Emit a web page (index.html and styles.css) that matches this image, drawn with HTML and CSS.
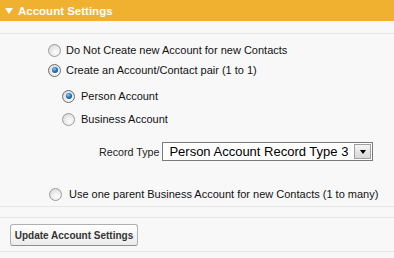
FILE: index.html
```html
<!DOCTYPE html>
<html>
<head>
<meta charset="utf-8">
<link rel="stylesheet" href="styles.css">
</head>
<body>
<div class="panel">
  <div class="header"><span class="tri"></span><span class="title">Account Settings</span></div>
  <div class="spacer"></div>
  <div class="options">
    <label class="row r1"><span class="radio"></span><span class="lbl">Do Not Create new Account for new Contacts</span></label>
    <label class="row r2"><span class="radio on"></span><span class="lbl">Create an Account/Contact pair (1 to 1)</span></label>
    <label class="row sub r3"><span class="radio on"></span><span class="lbl">Person Account</span></label>
    <label class="row sub r4"><span class="radio"></span><span class="lbl">Business Account</span></label>
    <div class="row rt">
      <span class="rtlabel">Record Type</span>
      <div class="select"><span class="seltext">Person Account Record Type 3</span><span class="arrow"><span class="caret"></span></span></div>
    </div>
    <label class="row r5"><span class="radio"></span><span class="lbl">Use one parent Business Account for new Contacts (1 to many)</span></label>
  </div>
  <div class="gap"></div>
  <div class="actions">
    <button class="btn">Update Account Settings</button>
  </div>
</div>
</body>
</html>
```
FILE: styles.css
```css
html, body {
  margin: 0;
  padding: 0;
  background: #f8f8f8;
}
body {
  font-family: "Liberation Sans", Arial, sans-serif;
  font-size: 11px;
  color: #000;
}
.panel {
  width: 394px;
  background: #f8f8f8;
}
.header {
  height: 21px;
  background: #efb12f;
  display: flex;
  align-items: center;
  color: #fff;
  font-weight: bold;
  font-size: 11.5px;
}
.tri {
  width: 0;
  height: 0;
  margin-left: 5px;
  margin-right: 5px;
  border-left: 4px solid transparent;
  border-right: 4px solid transparent;
  border-top: 6px solid #fff;
  margin-top: 0;
}
.title {
  white-space: nowrap;
}
.spacer {
  height: 12px;
  border-bottom: 1px solid #e5e5e5;
}
.options {
  display: flex;
  flex-direction: column;
  padding-top: 6px;
  padding-bottom: 2px;
  border-bottom: 1px solid #e5e5e5;
}
.row {
  height: 20px;
  display: flex;
  align-items: center;
  white-space: nowrap;
}
.r1, .r2 { padding-left: 48px; }
.sub { padding-left: 62px; }
.r3 { margin-top: 6px; }
.r4 { margin-top: 3px; }
.rt { margin-top: 13px; padding-left: 99px; height: 19px; }
.r5 { margin-top: 23px; padding-left: 49px; }
.radio {
  width: 11px;
  height: 11px;
  border-radius: 50%;
  border: 1px solid #9a9a9a;
  background: radial-gradient(circle at 62% 68%, #fefefe 0%, #f0f0f0 35%, #d2d2d2 100%);
  box-sizing: content-box;
  flex: none;
  position: relative;
}
.radio.on {
  border-color: #6d6d6d;
}
.radio.on::after {
  content: "";
  position: absolute;
  left: 2.5px;
  top: 2.5px;
  width: 6px;
  height: 6px;
  border-radius: 50%;
  background: radial-gradient(circle at 40% 35%, #8fd0f5 0%, #1f78c0 45%, #0b3f78 100%);
}
.lbl {
  margin-left: 5px;
  color: #111;
}
.sub .lbl { margin-left: 6px; }
.r5 .lbl { margin-left: 7px; }
.rtlabel {
  font-size: 10.7px;
  color: #222;
  margin-right: 3px;
}
.select {
  width: 209px;
  height: 17px;
  border: 1px solid #7a7a7a;
  background: #fff;
  display: flex;
  align-items: center;
  justify-content: space-between;
}
.seltext {
  font-size: 13px;
  color: #000;
  padding-left: 6px;
  line-height: 17px;
}
.arrow {
  width: 15px;
  height: 13px;
  margin-right: 1px;
  border: 1px solid #a0a0a0;
  background: linear-gradient(#f4f4f4, #d8d8d8);
  display: flex;
  align-items: center;
  justify-content: center;
}
.caret {
  width: 0;
  height: 0;
  border-left: 3.5px solid transparent;
  border-right: 3.5px solid transparent;
  border-top: 4px solid #000;
}
.gap {
  height: 10px;
  border-bottom: 1px solid #e5e5e5;
}
.actions {
  padding: 6px 0 5px 10px;
  border-bottom: 1px solid #e5e5e5;
}
.btn {
  height: 22px;
  width: 128px;
  padding: 0;
  border: 1px solid #b0b0b0;
  border-bottom-color: #8f8f8f;
  border-radius: 3px;
  background: linear-gradient(#ffffff, #ececec);
  font-family: "Liberation Sans", Arial, sans-serif;
  font-weight: bold;
  font-size: 10px;
  color: #333;
  display: block;
  white-space: nowrap;
}
```
